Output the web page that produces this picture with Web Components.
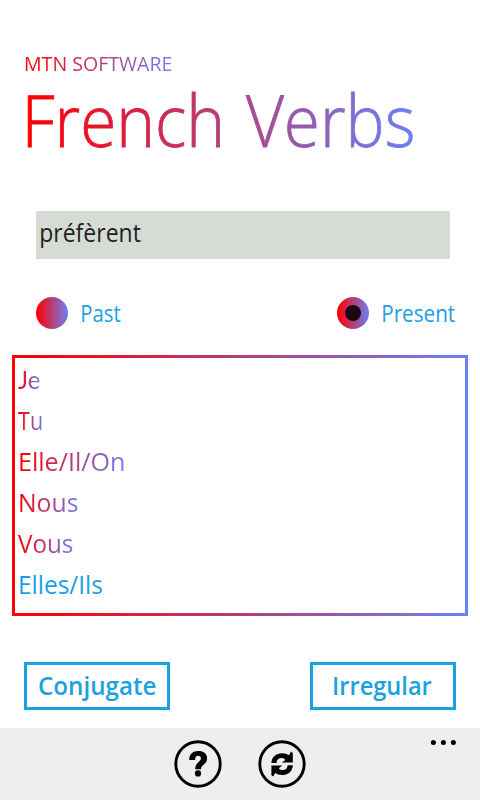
<!DOCTYPE html>
<html lang="en">
<head>
<meta charset="utf-8">
<title>French Verbs</title>
<style>
body{margin:0;background:#fff;font-family:"Open Sans","Noto Sans",sans-serif}
</style>
</head>
<body>
<verbs-page></verbs-page>
<script>
const GRAD = 'linear-gradient(90deg,#f00 0%,#fa0308 5%,#6a80f4 100%)';
const base = (host, html) => { host.attachShadow({mode:'open'}).innerHTML = html; };

// A single line of text, condensed so that its ink fills the "ink" width.
class FitText extends HTMLElement {
  connectedCallback() {
    const size = +this.getAttribute('size'), weight = this.getAttribute('weight') || '400';
    const ink = +this.getAttribute('ink'), text = this.textContent;
    const gap = this.getAttribute('gap') || '0';
    const family = this.getAttribute('face') || 'Open Sans';
    const ctx = document.createElement('canvas').getContext('2d');
    ctx.font = `${weight} ${size}px "${family}","Noto Sans",sans-serif`;
    ctx.wordSpacing = gap + 'px';
    const m = ctx.measureText(text);
    const k = ink / (m.actualBoundingBoxRight + m.actualBoundingBoxLeft);
    const dx = m.actualBoundingBoxLeft * k;
    const paint = this.hasAttribute('gradient')
      ? `background:${GRAD};-webkit-background-clip:text;background-clip:text;color:transparent;` : '';
    const stroke = this.hasAttribute('stroke') ? `-webkit-text-stroke:${this.getAttribute('stroke')}px transparent;` : '';
    base(this, `<style>
      :host{display:block;width:${ink}px;font-family:"${family}","Noto Sans",sans-serif;font-size:${size}px;
        font-weight:${weight};word-spacing:${gap}px;white-space:nowrap}
      span{display:inline-block;vertical-align:top;transform-origin:0 0;transform:translateX(${dx}px) scaleX(${k});${paint}${stroke}}
      </style><span><slot></slot></span>`);
  }
}

class VerbHeader extends HTMLElement {
  constructor() { super(); base(this, `<style>
    :host{display:block;padding:50px 0 0 25.3px;height:161px}
    .app{line-height:24px}
    .title{line-height:76px;margin:6px 0 0 2.6px}
    header{padding-top:2px}
    </style>
    <header>
    <fit-text class="app" size="20" ink="146.3" gradient>MTN SOFTWARE</fit-text>
    <fit-text class="title" size="71" weight="300" ink="384.5" gap="4" stroke="0.8" gradient>French Verbs</fit-text>
    </header>`); }
}

class VerbInput extends HTMLElement {
  constructor() { super(); base(this, `<style>
    :host{display:block;box-sizing:border-box;height:48px;margin:0 30px 0 36px;padding-left:5px;
      background:#d6dbd5;color:#1f1f1f;line-height:43px}
    </style><slot></slot>`); }
}

class TenseRadio extends HTMLElement {
  constructor() { super(); base(this, `<style>
    :host{display:flex;align-items:center;gap:14px;height:32px;line-height:32px;color:#1ba1e2}
    i{display:grid;place-items:center;width:32px;height:32px;border-radius:50%;background:${GRAD}}
    :host([checked]) i::after{content:"";width:16px;height:16px;border-radius:50%;background:#1b0712}
    </style><i></i><slot></slot>`); }
}

class PronounList extends HTMLElement {
  constructor() { super(); base(this, `<style>
    :host{display:block;box-sizing:border-box;height:261px;margin:26px 12px 0;padding:1px 0 0 3px;
      border:3px solid;border-image:${GRAD} 3;line-height:41px}
    </style><slot></slot>`); }
}

class OutlineButton extends HTMLElement {
  constructor() { super(); base(this, `<style>
    :host{display:flex;justify-content:center;box-sizing:border-box;width:146px;height:48px;
      border:3px solid #1ba1e2;color:#1ba1e2;line-height:41px}
    </style><slot></slot>`); }
}

class AppBar extends HTMLElement {
  constructor() {
    super();
    const arrow = 'M13.4 23C13.6 17 18 13.2 24 13.2C27 13.2 29.2 14 31 15.2L33 11.6L34.8 13V22.6H23.8L27.4 20C26.3 18.6 25 18.1 23.4 18.1C20.7 18.1 18.8 19.8 18.5 23Z';
    base(this, `<style>
    :host{display:grid;grid-template-columns:1fr auto 1fr;height:72px;background:#eee}
    nav{grid-column:2;display:flex;gap:36px;padding-top:12px}
    svg{display:block}
    .more{justify-self:end;margin:11px 23px 0 0}
    </style>
    <nav>
      <svg width="48" height="48" viewBox="0 0 48 48"><circle cx="24" cy="24" r="22.2" fill="none" stroke="#000" stroke-width="2.9"/>
        <path d="M15.2 19.9C15.3 13.8 18.8 10.9 24.3 10.9C29.6 10.9 33.1 13.6 33.1 18.2C33.1 21.6 31.3 23.3 29.3 25C27.5 26.6 27 27.4 27 29.2H21.2C21.2 25.7 22.3 24.2 24.4 22.2C26.1 20.7 26.9 19.8 26.9 18.3C26.9 16.7 25.9 15.8 24.2 15.8C22.1 15.8 21.1 17.2 21.1 19.9Z"/>
        <circle cx="24" cy="33.4" r="3.1"/></svg>
      <svg width="48" height="48" viewBox="0 0 48 48"><circle cx="24" cy="24" r="22.2" fill="none" stroke="#000" stroke-width="2.9"/>
        <path d="${arrow}"/><path transform="rotate(180 24.1 24.1)" d="${arrow}"/></svg>
    </nav>
    <svg class="more" width="27" height="6" viewBox="0 0 27 6"><circle cx="3.4" cy="3.4" r="2.5"/><circle cx="13.4" cy="3.4" r="2.5"/><circle cx="23.4" cy="3.4" r="2.5"/></svg>`); }
}

class VerbsPage extends HTMLElement {
  constructor() { super(); base(this, `<style>
    :host{display:flex;flex-direction:column;width:480px;height:800px;overflow:hidden;background:#fff}
    verb-header{box-sizing:content-box}
    .tenses{display:flex;justify-content:space-between;padding:38px 25px 0 36px}
    .actions{display:flex;justify-content:space-between;padding:46px 24px 18px}
    .current{color:#1ba1e2}
    .i1{margin-left:1.8px}.i0{margin-left:0}
    </style>
    <verb-header></verb-header>
    <verb-input><fit-text size="25" ink="100">préfèrent</fit-text></verb-input>
    <div class="tenses">
      <tense-radio><fit-text size="23" ink="38.5">Past</fit-text></tense-radio>
      <tense-radio checked><fit-text size="23" ink="72">Present</fit-text></tense-radio>
    </div>
    <pronoun-list>
      <fit-text class="i0" size="25" face="Lato" ink="22" gradient>Je</fit-text>
      <fit-text class="i0" size="25" ink="24" gradient>Tu</fit-text>
      <fit-text class="i1" size="25" ink="104" gradient>Elle/Il/On</fit-text>
      <fit-text class="i1" size="25" ink="57.5" gradient>Nous</fit-text>
      <fit-text class="i0" size="25" ink="54.5" gradient>Vous</fit-text>
      <fit-text class="i1 current" size="25" ink="82">Elles/Ils</fit-text>
    </pronoun-list>
    <div class="actions">
      <outline-button><fit-text size="25" weight="600" ink="117">Conjugate</fit-text></outline-button>
      <outline-button><fit-text size="25" weight="600" ink="98">Irregular</fit-text></outline-button>
    </div>
    <app-bar></app-bar>`); }
}

customElements.define('fit-text', FitText);
customElements.define('verb-header', VerbHeader);
customElements.define('verb-input', VerbInput);
customElements.define('tense-radio', TenseRadio);
customElements.define('pronoun-list', PronounList);
customElements.define('outline-button', OutlineButton);
customElements.define('app-bar', AppBar);
customElements.define('verbs-page', VerbsPage);
</script>
</body>
</html>
